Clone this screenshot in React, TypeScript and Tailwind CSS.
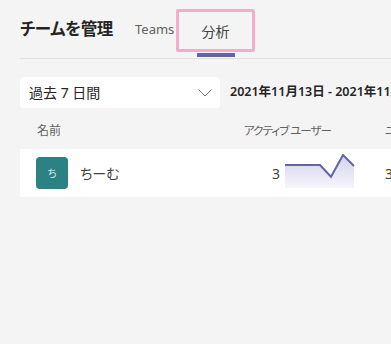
export default function App() {
  return (
    <div className="min-h-[344px] w-[391px] overflow-hidden bg-[#f4f4f4] font-['Noto_Sans','Noto_Sans_CJK_JP',sans-serif] text-[#252423] [font-feature-settings:'palt']">
      {/* header with tabs */}
      <div className="ml-5 flex h-[59px] border-b border-[#e0e0e0]">
        <div className="flex w-[90px] items-center whitespace-nowrap text-[16.5px] font-bold leading-none tracking-[-0.3px]">
          チームを管理
        </div>
        <div className="ml-[25px] flex w-[38px] items-center pt-[1px] text-[13px] text-[#616161]">Teams</div>
        <div className="ml-[3px] flex flex-col pt-[9px]">
          <button
            type="button"
            className="flex h-[43px] w-[79px] items-center justify-center rounded-[2px] border-[3px] border-[#f4acc8] pt-[1px] text-[14px] text-[#424242]"
          >
            分析
          </button>
          <div className="mx-auto mt-[1px] h-[4px] w-[38px] bg-[#6264a7]" />
        </div>
      </div>

      {/* range picker + date */}
      <div className="mt-[18px] flex items-center whitespace-nowrap">
        <div className="ml-5 flex h-[31px] w-[200px] shrink-0 items-center justify-between rounded-[4px] bg-white pl-[9px] pr-[8px] text-[14px]">
          <span>過去 7 日間</span>
          <svg width="14" height="8" viewBox="0 0 14 8" fill="none" stroke="#7a7a7a" strokeWidth="1">
            <path d="M0.5 0.5 L7 7 L13.5 0.5" />
          </svg>
        </div>
        <div className="ml-[10px] text-[12.5px] font-semibold">2021年11月13日 - 2021年11月19日</div>
      </div>

      {/* column headers */}
      <div className="ml-5 mt-[12px] flex h-[22px] items-center whitespace-nowrap pl-[17px] text-[12px] text-[#616161]">
        <div className="w-[207px] shrink-0">名前</div>
        <div className="w-[141px] shrink-0 text-[11.5px] tracking-[-1px]">アクティブ ユーザー</div>
        <div className="shrink-0 text-[11.5px] tracking-[-1px]">ユーザー</div>
      </div>

      {/* team row */}
      <div className="ml-5 mt-[7px] flex h-[48px] items-center whitespace-nowrap bg-white pl-4">
        <div className="flex w-[208px] shrink-0 items-center">
          <div className="flex h-8 w-8 items-center justify-center rounded-[4px] bg-[#2c8183] text-[10px] text-[#d6ecec]">
            ち
          </div>
          <span className="ml-3 text-[14px] text-[#424242]">ちーむ</span>
        </div>
        <div className="flex w-[141px] shrink-0 items-center">
          <span className="ml-[28px] text-[14px] text-[#424242]">3</span>
          <svg className="ml-[5px]" width="70" height="38" viewBox="0 0 70 38">
            <defs>
              <linearGradient id="spark" x1="0" y1="0" x2="0" y2="1">
                <stop offset="0" stopColor="#d4d2ec" />
                <stop offset="1" stopColor="#f6f5fb" />
              </linearGradient>
            </defs>
            <path d="M0 11 L35 11 L46 22.7 L58 1 L69 12 L69 34 L0 34 Z" fill="url(#spark)" />
            <path d="M0 11 L35 11 L46 22.7 L58 1 L69 12" fill="none" stroke="#6264a7" strokeWidth="2" />
          </svg>
        </div>
        <span className="text-[14px] text-[#424242]">3</span>
      </div>
    </div>
  );
}
